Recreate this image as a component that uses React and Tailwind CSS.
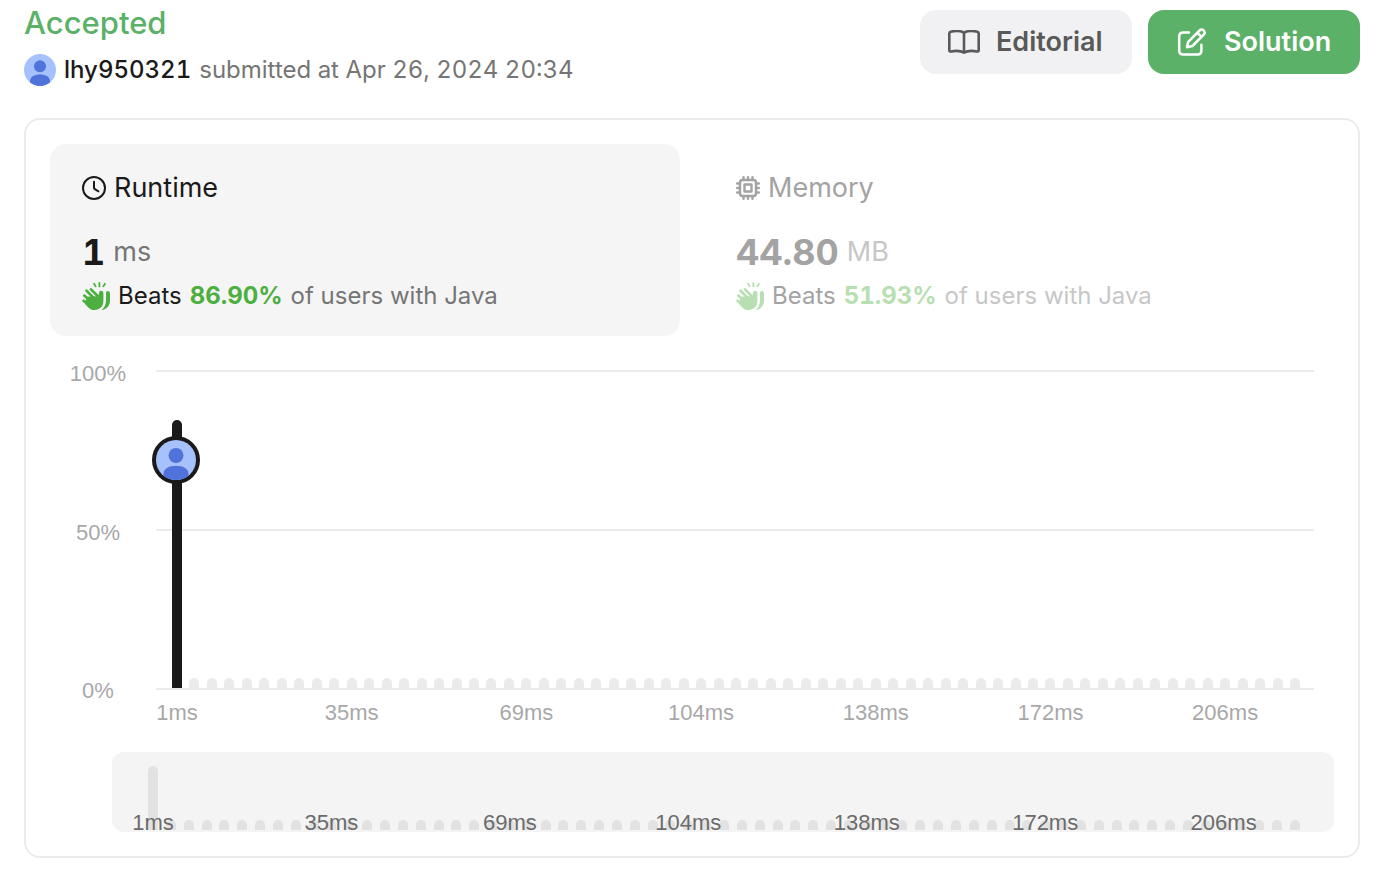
import React from "react";

const BAR_COUNT = 65;
const LABELS = { 0: "1ms", 10: "35ms", 20: "69ms", 30: "104ms", 40: "138ms", 50: "172ms", 60: "206ms" };
const BARS = Array.from({ length: BAR_COUNT }, (_, i) => i);

function Avatar({ className }) {
  return (
    <svg viewBox="0 0 32 32" className={className} aria-hidden="true">
      <clipPath id="avatar-clip">
        <circle cx="16" cy="16" r="16" />
      </clipPath>
      <g clipPath="url(#avatar-clip)">
        <rect width="32" height="32" fill="#a6c1fb" />
        <circle cx="16" cy="12.3" r="6" fill="#4f73db" />
        <path d="M6 27.4C6 23 10 20.6 16 20.6S26 23 26 27.4V32H6Z" fill="#4f73db" />
      </g>
    </svg>
  );
}

function BookIcon() {
  return (
    <svg viewBox="0 0 32 24" className="h-6 w-8 shrink-0" fill="none" stroke="currentColor" strokeWidth="2.6" strokeLinejoin="round" strokeLinecap="round" aria-hidden="true">
      <path d="M16 2.6C12.6.9 6.6.8 2.6 1.8Q1.3 2.1 1.3 3.4V20.2Q1.3 21.8 2.9 21.5C7.5 20.6 12.6 20.6 16 22.6C19.4 20.6 24.5 20.6 29.1 21.5Q30.7 21.8 30.7 20.2V3.4Q30.7 2.1 29.4 1.8C25.4.8 19.4.9 16 2.6ZM16 2.6V22.6" />
    </svg>
  );
}

function EditIcon() {
  return (
    <svg viewBox="0 0 32 28" className="h-7 w-8 shrink-0" fill="none" stroke="currentColor" strokeWidth="2.5" strokeLinejoin="round" strokeLinecap="round" aria-hidden="true">
      <path d="M13 4.4H7.2Q3.2 4.4 3.2 8.4V22.6Q3.2 26.6 7.2 26.6H21.4Q25.4 26.6 25.4 22.6V16.8" />
      <path d="M11 19.2L12.2 13.8L23.6 2.5Q25.7.6 27.7 2.5Q29.7 4.6 27.7 6.7L16.4 18ZM21.4 4.8L25.5 8.9" />
    </svg>
  );
}

function ClockIcon() {
  return (
    <svg viewBox="0 0 24 24" className="size-6 shrink-0" fill="none" stroke="currentColor" strokeWidth="2" strokeLinecap="round" strokeLinejoin="round" aria-hidden="true">
      <circle cx="12" cy="12" r="11" />
      <path d="M12 5.7V12Q12 12.6 12.5 12.9L16.4 15.3" />
    </svg>
  );
}

function ChipIcon() {
  return (
    <svg viewBox="0 0 24 24" className="size-6 shrink-0" fill="none" stroke="currentColor" strokeWidth="2.4" strokeLinecap="round" strokeLinejoin="round" aria-hidden="true">
      <rect x="4" y="4" width="16" height="16" rx="2.5" />
      <rect x="8.5" y="8.5" width="7" height="7" />
      <path d="M7.5 1.2V4M12 1.2V4M16.5 1.2V4M7.5 20V22.8M12 20V22.8M16.5 20V22.8M1.2 7.5H4M1.2 12H4M1.2 16.5H4M20 7.5H22.8M20 12H22.8M20 16.5H22.8" />
    </svg>
  );
}

function ClapIcon() {
  return (
    <svg viewBox="0 0 28 28" className="size-7 shrink-0" fill="currentColor" stroke="currentColor" strokeLinecap="round" strokeLinejoin="round" aria-hidden="true">
      <path fill="none" strokeWidth="1.8" d="M12.1 1.8L13.6 4.4M17.4.9V4.4M22.9 1.8L21.4 4.4" />
      <path fill="none" strokeWidth="2.7" d="M9 7.4L16.6 15M4.6 8.8L13.4 17.6M2.3 13.6L10 20.4M1.7 18.8L8 23.4" />
      <path stroke="none" d="M9.8 14L15.2 14.4L16.8 15.4V11.4Q16.8 8.8 19 8.8Q21.4 8.8 21.4 11.4V18.8C21.4 24.6 17.6 28 12.6 28C9.6 28 7.6 26.8 5.8 24.9L2.8 21.8L5 15Z" />
      <path stroke="none" d="M24 10.6Q24.3 8.8 26.1 9.1Q28 9.4 28 11.8V18.2C28 23.6 24.6 27.6 19.6 28Q24 24.4 24 18.6Z" />
    </svg>
  );
}

function Metric({ active, icon, title, value, unit, percent }) {
  return (
    <button type="button" aria-pressed={active} className={active ? "rounded-2xl bg-[#f5f5f5] px-8 pt-7 pb-6 text-left text-[#1a1a1a]" : "rounded-2xl px-8 pt-7 pb-6 text-left text-[#a3a3a3]"}>
      <span className="flex h-8 items-center gap-2 text-[27px]">
        {icon}
        {title}
      </span>
      <span className="mt-7 flex h-10 items-center gap-2">
        <span className="text-4xl leading-10 font-bold tabular-nums">{value}</span>
        <span className={active ? "text-[27px] text-[#757575]" : "text-[27px] text-[#c7c7c7]"}>{unit}</span>
      </span>
      <span className="mt-2 flex h-8 items-center gap-2 text-2xl whitespace-nowrap">
        <span className={active ? "text-[#4caf3f]" : "text-[#b7dfb2]"}>
          <ClapIcon />
        </span>
        <span>Beats</span>
        <span className={active ? "font-bold tabular-nums text-[#4caf3f]" : "font-bold tabular-nums text-[#b7dfb2]"}>{percent}</span>
        <span className={active ? "text-[#757575]" : "text-[#c7c7c7]"}>of users with Java</span>
      </span>
    </button>
  );
}

function Chart() {
  return (
    <div className="mt-[34px] flex pr-5 pl-4 font-['Liberation_Sans',Arial,sans-serif] text-[22px] leading-6 text-[#a8a8a8]">
      <div className="-mt-2 flex h-[341px] w-16 flex-col justify-between text-center">
        <span>100%</span>
        <span>50%</span>
        <span>0%</span>
      </div>
      <div className="relative ml-[26px] h-[360px] flex-1">
        <div className="flex h-80 flex-col justify-between">
          <div className="h-0.5 bg-[#ebebeb]" />
          <div className="h-0.5 bg-[#ebebeb]" />
          <div className="h-0.5 bg-[#ebebeb]" />
        </div>
        <div className="absolute inset-x-0 top-0 flex justify-between pr-3.5 pl-4">
          {BARS.map((i) => (
            <div key={i} className="flex w-2.5 flex-col items-center">
              <div className="flex h-[318px] flex-col justify-end">
                {i === 0 ? (
                  <div className="flex h-[268px] w-2.5 flex-col items-center rounded-t-full bg-[#1a1a1a] pt-4">
                    <div className="mr-0.5 size-12 shrink-0 rounded-full border-4 border-[#1a1a1a] bg-[#1a1a1a]">
                      <Avatar className="size-10" />
                    </div>
                  </div>
                ) : (
                  <div className="h-2.5 w-2.5 rounded-t-full bg-[#ebebeb]" />
                )}
              </div>
              {LABELS[i] && <span className="mt-[13px] whitespace-nowrap">{LABELS[i]}</span>}
            </div>
          ))}
        </div>
      </div>
    </div>
  );
}

function RangeChart() {
  return (
    <div className="mt-[22px] ml-[62px] flex h-20 items-end justify-between rounded-xl bg-[#f4f4f4] pr-[34px] pb-0.5 pl-9 font-['Liberation_Sans',Arial,sans-serif] text-[22px] leading-6 text-[#6b6b6b]">
      {BARS.map((i) => (
        <div key={i} className="relative flex w-2.5 justify-center">
          <div className={i === 0 ? "h-16 w-2.5 rounded-t-full bg-[#e2e2e2]" : "h-2.5 w-2.5 rounded-t-full bg-[#e2e2e2]"} />
          {LABELS[i] && (
            <span className="absolute -bottom-[5px] left-1/2 z-10 -translate-x-1/2 whitespace-nowrap">{LABELS[i]}</span>
          )}
        </div>
      ))}
    </div>
  );
}

export default function App() {
  return (
    <main className="bg-white pr-[34px] pb-8 pl-6 font-[Inter,sans-serif] text-[#1a1a1a]">
      <header className="flex items-start justify-between">
        <div className="pt-[3px]">
          <h1 className="text-[31px] leading-10 font-medium text-[#5cb168]">Accepted</h1>
          <div className="mt-[11px] flex h-8 items-center gap-2 text-2xl whitespace-nowrap">
            <Avatar className="size-8" />
            <span className="font-medium tabular-nums">lhy950321</span>
            <span className="text-[#757575] tabular-nums">submitted at Apr 26, 2024 20:34</span>
          </div>
        </div>
        <div className="flex gap-4 pt-2.5">
          <button type="button" className="flex h-16 w-[212px] items-center gap-4 rounded-2xl bg-[#f1f1f4] px-7 text-[27px] font-semibold text-[#595959]">
            <BookIcon />
            Editorial
          </button>
          <button type="button" className="flex h-16 w-[212px] items-center gap-4 rounded-2xl bg-[#5cb168] px-7 text-[27px] font-semibold text-white">
            <EditIcon />
            Solution
          </button>
        </div>
      </header>
      <section className="mt-8 rounded-2xl border-2 border-[#ebebeb] p-6">
        <div className="grid grid-cols-2 gap-6">
          <Metric active icon={<ClockIcon />} title="Runtime" value="1" unit="ms" percent="86.90%" />
          <Metric active={false} icon={<ChipIcon />} title="Memory" value="44.80" unit="MB" percent="51.93%" />
        </div>
        <Chart />
        <RangeChart />
      </section>
    </main>
  );
}
